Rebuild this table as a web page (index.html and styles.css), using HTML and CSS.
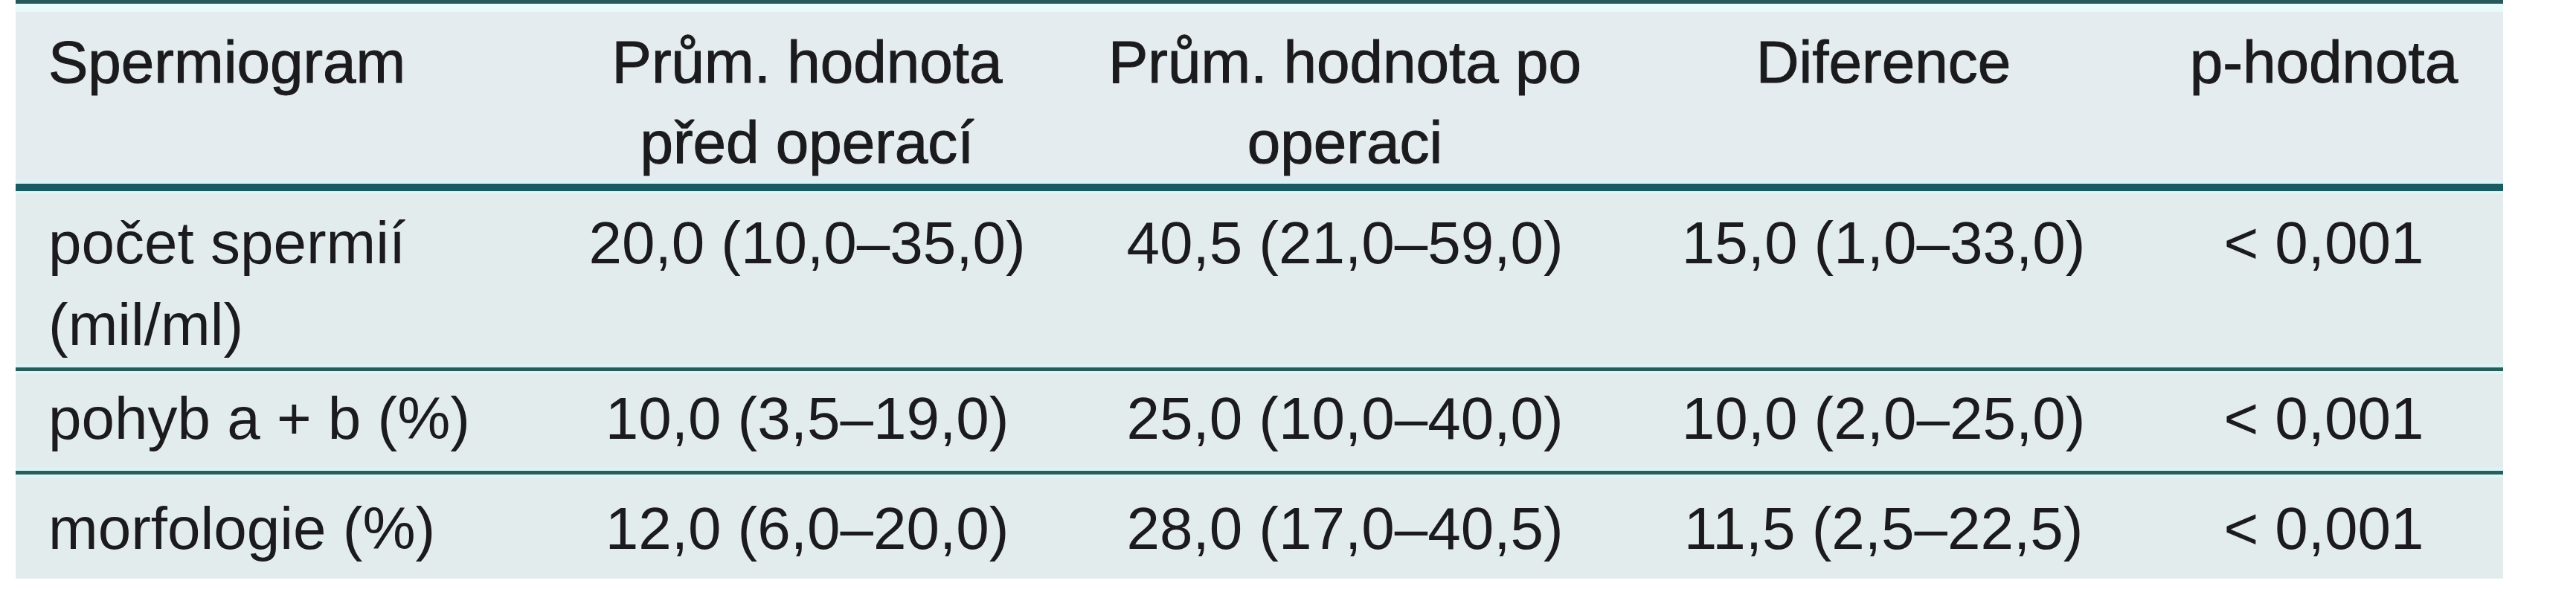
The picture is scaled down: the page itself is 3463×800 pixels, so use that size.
FILE: index.html
```html
<!DOCTYPE html>
<html lang="cs">
<head>
<meta charset="utf-8">
<title>Spermiogram</title>
<link rel="stylesheet" href="styles.css">
</head>
<body>
<div class="table">
  <div class="head">
    <div class="cell first">Spermiogram</div>
    <div class="cell">Prům. hodnota před operací</div>
    <div class="cell">Prům. hodnota po operaci</div>
    <div class="cell">Diference</div>
    <div class="cell">p-hodnota</div>
  </div>
  <div class="row row1">
    <div class="cell first">počet spermií (mil/ml)</div>
    <div class="cell">20,0 (10,0–35,0)</div>
    <div class="cell">40,5 (21,0–59,0)</div>
    <div class="cell">15,0 (1,0–33,0)</div>
    <div class="cell">&lt; 0,001</div>
  </div>
  <div class="row row2">
    <div class="cell first">pohyb a + b (%)</div>
    <div class="cell">10,0 (3,5–19,0)</div>
    <div class="cell">25,0 (10,0–40,0)</div>
    <div class="cell">10,0 (2,0–25,0)</div>
    <div class="cell">&lt; 0,001</div>
  </div>
  <div class="row row3">
    <div class="cell first">morfologie (%)</div>
    <div class="cell">12,0 (6,0–20,0)</div>
    <div class="cell">28,0 (17,0–40,5)</div>
    <div class="cell">11,5 (2,5–22,5)</div>
    <div class="cell">&lt; 0,001</div>
  </div>
</div>
</body>
</html>
```
FILE: styles.css
```css
html, body {
  margin: 0;
  padding: 0;
  background: #ffffff;
}

body {
  font-family: "Liberation Sans", Arial, sans-serif;
  font-size: 80px;
  color: #1b1b1d;
}

.table {
  margin-left: 21px;
  width: 3344px;
  border-top: 5px solid #27565b;
}

.head,
.row {
  display: grid;
  grid-template-columns: 714px 700px 746px 702px 482px;
  box-sizing: border-box;
}

.head {
  background: #e4ecef;
  border-top: 11px solid #e6f9fb;
  border-bottom: 10px solid #1a5c62;
  height: 252px;
  padding-top: 14px;
  line-height: 108px;
  box-shadow: inset 0 -5px 0 #dff3f6;
  -webkit-text-stroke: 1px #1b1b1d;
}

.row {
  background: #e3ecec;
  line-height: 110px;
}

.row1 {
  height: 237px;
  padding-top: 15px;
  box-shadow: inset 0 4px 0 #dcf5f7, inset 0 -5px 0 #dcf3f5;
}

.row2 {
  height: 139px;
  padding-top: 9px;
  border-top: 5px solid #285e59;
  box-shadow: inset 0 4px 0 #dcf5f7, inset 0 -5px 0 #dcf3f5;
}

.row3 {
  height: 145px;
  padding-top: 18px;
  border-top: 5px solid #285e59;
  box-shadow: inset 0 4px 0 #dcf5f7;
}

.cell {
  text-align: center;
  padding: 0 30px;
}

.cell.first {
  text-align: left;
  padding-left: 44px;
  padding-right: 20px;
}
```
